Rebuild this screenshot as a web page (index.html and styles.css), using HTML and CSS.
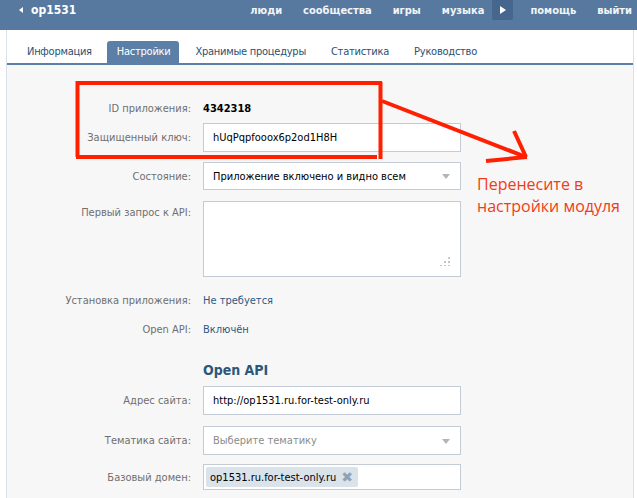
FILE: index.html
```html
<!DOCTYPE html>
<html lang="ru">
<head>
<meta charset="utf-8">
<link rel="stylesheet" href="styles.css">
</head>
<body>
<div class="header">
  <div class="brand"><span class="back"></span>op1531</div>
  <nav class="nav">
    <a class="nav-item n1">люди</a>
    <a class="nav-item n2">сообщества</a>
    <a class="nav-item n3">игры</a>
    <a class="nav-item n4">музыка</a>
    <span class="play"><span class="play-tri"></span></span>
    <a class="nav-item n5">помощь</a>
    <a class="nav-item n6">выйти</a>
  </nav>
</div>
<div class="page">
  <div class="tabs">
    <span class="tab">Информация</span>
    <span class="tab active">Настройки</span>
    <span class="tab">Хранимые процедуры</span>
    <span class="tab">Статистика</span>
    <span class="tab">Руководство</span>
  </div>
  <div class="body">
    <div class="form">
      <div class="row r-id"><div class="label">ID приложения:</div><div class="value bold">4342318</div></div>
      <div class="row r-key"><div class="label">Защищенный ключ:</div><div class="input h29">hUqPqpfooox6p2od1H8H</div></div>
      <div class="row r-state"><div class="label">Состояние:</div><div class="input select h28">Приложение включено и видно всем<span class="caret"></span></div></div>
      <div class="row r-req top"><div class="label pt">Первый запрос к API:</div><div class="input textarea"><span class="grip"></span></div></div>
      <div class="row r-inst"><div class="label">Установка приложения:</div><div class="value link">Не требуется</div></div>
      <div class="row r-open"><div class="label">Open API:</div><div class="value link">Включён</div></div>
      <div class="row r-head"><div class="label"></div><div class="heading">Open API</div></div>
      <div class="row r-addr"><div class="label">Адрес сайта:</div><div class="input h29">http://op1531.ru.for-test-only.ru</div></div>
      <div class="row r-theme"><div class="label">Тематика сайта:</div><div class="input select h29 placeholder">Выберите тематику<span class="caret"></span></div></div>
      <div class="row r-dom"><div class="label">Базовый домен:</div><div class="input chipbox"><span class="chip">op1531.ru.for-test-only.ru<span class="chip-x">✖</span></span></div></div>
    </div>
    <div class="note">Перенесите в<br>настройки модуля</div>
  </div>
  <svg class="annot" width="637" height="498" viewBox="0 0 637 498">
    <g fill="none" stroke="#fe2000" stroke-width="4" stroke-linecap="butt">
      <path d="M77.5 81 V157"/>
      <path d="M76 83 H382"/>
      <path d="M380.5 82 V159"/>
      <path d="M76 157 H377"/>
      <path d="M382 101 L526 157"/>
      <path d="M514 131 L526 157"/>
      <path d="M486 161 L527 157"/>
    </g>
  </svg>
</div>
</body>
</html>
```
FILE: styles.css
```css
html, body {
  margin: 0;
  padding: 0;
  background: #ffffff;
  font-family: "DejaVu Sans Condensed", "DejaVu Sans", sans-serif;
  font-size: 11px;
  color: #000;
}
.header {
  height: 30px;
  background: #57799f;
  display: flex;
  align-items: flex-start;
  color: #fff;
  font-weight: bold;
  font-size: 11px;
}
.brand {
  display: flex;
  align-items: center;
  height: 20px;
  padding-left: 19px;
  font-size: 12px;
}
.back {
  width: 0;
  height: 0;
  border-top: 3px solid transparent;
  border-bottom: 3px solid transparent;
  border-right: 4px solid #fff;
  margin-right: 8px;
}
.nav {
  display: flex;
  align-items: center;
  margin-left: auto;
  height: 20px;
  padding-right: 5px;
}
.nav-item {
  color: #f2f5f8;
  margin-left: 21px;
}
.n4 { margin-right: 8px; }
.n5 { margin-left: 17px; }
.play {
  width: 21px;
  height: 20px;
  background: #46668d;
  border-radius: 0 0 2px 2px;
  display: flex;
  align-items: center;
  justify-content: center;
}
.play-tri {
  width: 0;
  height: 0;
  border-top: 4px solid transparent;
  border-bottom: 4px solid transparent;
  border-left: 6px solid #fff;
}
.page {
  position: relative;
  margin: 0 3px 0 6px;
  border-left: 1px solid #dbe1e8;
  border-right: 1px solid #dbe1e8;
  height: 468px;
  background: #f7f7f7;
}
.tabs {
  background: #fff;
  padding: 11px 0 0 10px;
  border-bottom: 2px solid #5b7fa6;
  display: flex;
  height: 22px;
}
.tab {
  line-height: 22px;
  padding: 0 9px 0 10px;
  margin-right: 6px;
  color: #2b4f72;
  border-radius: 3px 3px 0 0;
  letter-spacing: -0.25px;
}
.tab.active {
  background: #5b7fa6;
  color: #fff;
}
.body {
  padding-top: 29px;
}
.form {
  display: flex;
  flex-direction: column;
}
.row {
  display: grid;
  grid-template-columns: 184px 258px;
  column-gap: 12px;
  align-items: center;
}
.row.top { align-items: start; }
.label {
  text-align: right;
  color: #6f6f6f;
}
.label.pt { padding-top: 5px; }
.value { color: #000; }
.bold { font-weight: bold; font-size: 11px; }
.value.link { color: #2b5a85; }
.r-id { height: 29px; }
.r-key { margin-bottom: 10px; }
.r-state { margin-bottom: 11px; }
.r-req { margin-bottom: 13px; }
.r-inst { height: 20px; margin-bottom: 9px; }
.r-open { height: 20px; margin-bottom: 21px; }
.r-head { height: 20px; margin-bottom: 6px; }
.r-addr { margin-bottom: 11px; }
.r-theme { margin-bottom: 9px; }
.heading {
  color: #2b587a;
  font-weight: bold;
  font-size: 14px;
}
.input {
  box-sizing: border-box;
  background: #fff;
  border: 1px solid #c2cbd6;
  padding: 0 9px;
  display: flex;
  align-items: center;
  position: relative;
  color: #000;
}
.h29 { height: 29px; }
.h28 { height: 28px; }
.placeholder { color: #8c8c8c; }
.caret {
  position: absolute;
  right: 10px;
  top: 50%;
  margin-top: -2px;
  width: 0;
  height: 0;
  border-left: 4px solid transparent;
  border-right: 4px solid transparent;
  border-top: 5px solid #b0b6bd;
}
.textarea {
  height: 76px;
}
.grip {
  position: absolute;
  right: 10px;
  bottom: 10px;
  width: 11px;
  height: 10px;
  background:
    radial-gradient(circle, #c4c4c4 1px, transparent 1.3px) 0 0 / 4px 4px;
  clip-path: polygon(100% 0, 100% 100%, 0 100%);
}
.chipbox {
  height: 26px;
  padding: 0 2px;
}
.chip {
  background: #dae2ea;
  border-radius: 2px;
  height: 20px;
  display: flex;
  align-items: center;
  padding: 0 5px 0 4px;
  color: #000;
}
.chip-x {
  color: #8fa1b5;
  font-size: 14px;
  margin-left: 5px;
  font-family: "DejaVu Sans", sans-serif;
}
.note {
  position: absolute;
  left: 470px;
  top: 143px;
  color: #f23c18;
  font-family: "Open Sans", sans-serif;
  font-size: 16px;
  line-height: 22px;
}
.annot {
  position: absolute;
  left: -7px;
  top: -30px;
  pointer-events: none;
}
```
